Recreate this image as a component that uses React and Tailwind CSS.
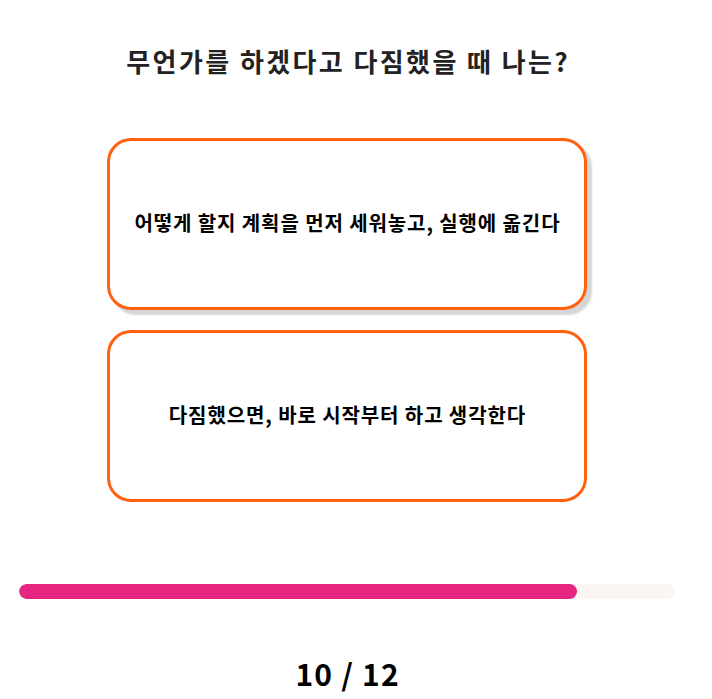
export default function App() {
  const font = { fontFamily: '"Noto Sans CJK KR", "Noto Sans", sans-serif' };
  return (
    <div className="w-[694px] bg-white flex flex-col items-center" style={font}>
      <h1 className="mt-[43px] h-[36px] leading-[36px] text-[26px] font-bold text-[#222222] tracking-[2.4px] pl-[2.4px]">
        무언가를 하겠다고 다짐했을 때 나는?
      </h1>
      <div className="mt-[59px] flex flex-col gap-[20px]">
        <button className="w-[480px] h-[172px] rounded-[24px] border-[3px] border-[#ff6110] bg-white flex items-center justify-center shadow-[5px_5px_2px_#d6d6d6] text-[20px] font-bold text-black tracking-[0.9px] pl-[0.9px] pb-[3px]">
          어떻게 할지 계획을 먼저 세워놓고, 실행에 옮긴다
        </button>
        <button className="w-[480px] h-[172px] rounded-[24px] border-[3px] border-[#ff6110] bg-white flex items-center justify-center text-[20px] font-bold text-black tracking-[0.9px] pl-[0.9px] pb-[3px]">
          다짐했으면, 바로 시작부터 하고 생각한다
        </button>
      </div>
      <div className="mt-[82px] w-[656px] h-[15px] rounded-full bg-[#faf6f3] overflow-hidden">
        <div className="h-full rounded-full bg-[#e62581]" style={{ width: "558px" }} />
      </div>
      <div className="mt-[54px] h-[40px] leading-[40px] text-[30px] font-bold text-black tracking-[1.2px] pl-[1.2px]">
        10 / 12
      </div>
    </div>
  );
}
